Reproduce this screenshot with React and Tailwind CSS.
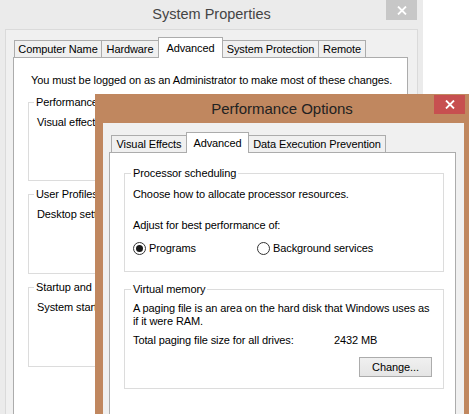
import React from "react";

const CloseIcon = () => (
  <svg width="10" height="9" viewBox="0 0 10 9">
    <path d="M1 0.5 L9 8.5 M9 0.5 L1 8.5" stroke="#fff" strokeWidth="1.8" />
  </svg>
);

const Tab = ({ label, className, active, first }) => (
  <div
    className={`flex items-center justify-center border border-b-0 border-[#acacac] whitespace-nowrap ${first ? "" : "-ml-px"} ${
      active ? "relative z-10 -mb-px h-[21px] bg-white" : "h-[17px] bg-[#f0f0f0]"
    } ${className}`}
  >
    {label}
  </div>
);

const GroupBox = ({ label, legendClass, className, children }) => (
  <fieldset className={`border border-[#dcdcdc] px-[8px] ${className}`}>
    <legend className={`px-[2px] leading-[15px] ${legendClass}`}>{label}</legend>
    {children}
  </fieldset>
);

const Radio = ({ checked, label, className }) => (
  <div className={`flex items-center ${className}`}>
    <span className="flex h-[13px] w-[13px] items-center justify-center rounded-full border border-[#333] bg-white">
      {checked && <span className="h-[7px] w-[7px] rounded-full bg-[#1a1a1a]" />}
    </span>
    <span className="ml-[3px]">{label}</span>
  </div>
);

const SystemProperties = () => (
  <div className="absolute left-0 top-0 h-[440px] w-[423px] bg-[#ebebeb]">
    <div className="relative flex h-[29px] items-center justify-center text-[14.5px] tracking-normal text-[#444]">
      System Properties
      <div className="absolute right-[6px] top-0 flex h-[20px] w-[31px] items-center justify-center bg-[#c7c7c7]">
        <CloseIcon />
      </div>
    </div>
    <div className="mx-[5px] h-[411px] border border-b-0 border-[#dadada] bg-[#f0f0f0] pl-[7px] pt-[7px]">
      <div className="ml-px flex items-end">
        <Tab first label="Computer Name" className="w-[88px]" />
        <Tab label="Hardware" className="w-[58px]" />
        <Tab active label="Advanced" className="w-[65px]" />
        <Tab label="System Protection" className="w-[97px]" />
        <Tab label="Remote" className="w-[48px]" />
      </div>
      <div className="h-[400px] w-[395px] border border-[#acacac] bg-white pl-[14px] pt-[15px]">
        <p className="ml-[3px] leading-[15px] whitespace-nowrap">
          You must be logged on as an Administrator to make most of these changes.
        </p>
        <GroupBox label="Performance" legendClass="-ml-[3px]" className="mt-[7px] w-[365px] pb-[50px]">
          <p className="mt-[5px] leading-[15px] whitespace-nowrap">
            Visual effects, processor scheduling, memory usage, and virtual memory
          </p>
        </GroupBox>
        <GroupBox label="User Profiles" legendClass="-ml-[3px]" className="mt-[6px] w-[365px] pb-[51px]">
          <p className="mt-[5px] leading-[15px] whitespace-nowrap">Desktop settings related to your sign-in</p>
        </GroupBox>
        <GroupBox label="Startup and Recovery" legendClass="-ml-[3px]" className="mt-[6px] w-[365px] pb-[51px]">
          <p className="mt-[5px] leading-[15px] whitespace-nowrap">
            System startup, system failure, and debugging information
          </p>
        </GroupBox>
      </div>
    </div>
  </div>
);

const PerformanceOptions = () => (
  <div className="absolute left-[95px] top-[94px] h-[330px] w-[374px] bg-[#c0875f]">
    <div className="relative flex h-[29px] items-center justify-center pt-[2px] text-[15px] tracking-normal text-[#222]">
      Performance Options
      <div className="absolute right-[4px] top-[1px] flex h-[19px] w-[31px] items-center justify-center bg-[#c75050]">
        <CloseIcon />
      </div>
    </div>
    <div className="ml-[8px] h-[301px] w-[361px] bg-[#f0f0f0] pl-[6px] pt-[9px]">
      <div className="ml-[2px] flex items-end">
        <Tab first label="Visual Effects" className="w-[76px]" />
        <Tab active label="Advanced" className="w-[63px]" />
        <Tab label="Data Execution Prevention" className="w-[138px]" />
      </div>
      <div className="h-[290px] w-[347px] border border-[#acacac] bg-white pl-[14px] pt-[13px]">
        <GroupBox label="Processor scheduling" legendClass="-ml-[2px]" className="w-[320px] pb-[15px]">
          <p className="mt-[6px] leading-[15px] whitespace-nowrap">Choose how to allocate processor resources.</p>
          <p className="mt-[16px] leading-[15px] whitespace-nowrap">Adjust for best performance of:</p>
          <div className="mt-[8px] flex leading-[15px]">
            <Radio checked label="Programs" className="w-[124px]" />
            <Radio label="Background services" />
          </div>
        </GroupBox>
        <GroupBox label="Virtual memory" legendClass="-ml-[2px]" className="mt-[10px] w-[320px] pb-[11px]">
          <p className="mt-[5px] leading-[13px] whitespace-nowrap">
            A paging file is an area on the hard disk that Windows uses as
            <br />
            if it were RAM.
          </p>
          <div className="mt-[5px] flex leading-[15px] whitespace-nowrap">
            <span className="w-[201px]">Total paging file size for all drives:</span>
            <span>2432 MB</span>
          </div>
          <div className="mt-[9px] flex justify-end pr-[3px]">
            <button
              type="button"
              className="h-[20px] w-[73px] border border-[#acacac] bg-linear-to-b from-[#f0f0f0] to-[#e5e5e5] text-[11px] tracking-[-0.1px] text-black"
            >
              Change...
            </button>
          </div>
        </GroupBox>
      </div>
    </div>
  </div>
);

export default function App() {
  return (
    <div className="relative h-[414px] w-[471px] overflow-hidden bg-white font-['Liberation_Sans',sans-serif] text-[11px] tracking-[-0.1px] text-black">
      <SystemProperties />
      <PerformanceOptions />
    </div>
  );
}
